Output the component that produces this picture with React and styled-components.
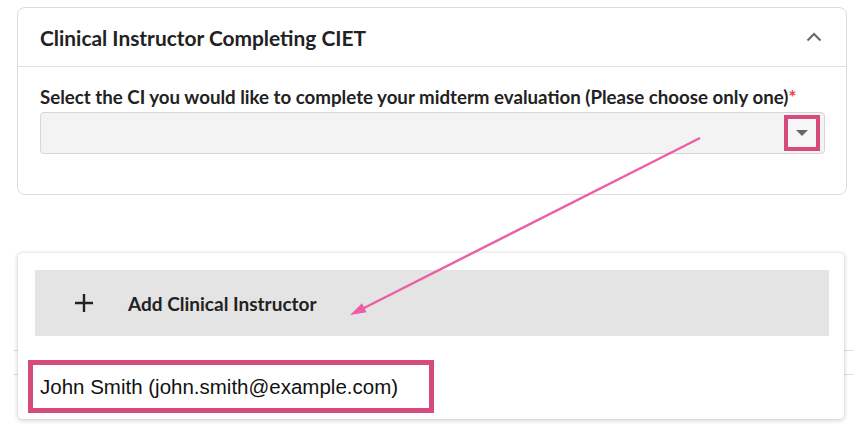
import React from "react";
import styled, { createGlobalStyle } from "styled-components";

const GlobalStyle = createGlobalStyle`
  html, body { margin: 0; padding: 0; background: #ffffff; }
  body { font-family: Lato, "Noto Sans", "Liberation Sans", sans-serif; color: #222; }
  * { box-sizing: border-box; }
`;

const Page = styled.div`
  position: relative;
  width: 854px;
  height: 428px;
  overflow: hidden;
  padding-top: 7px;
`;

const Card = styled.section`
  margin-left: 17px;
  width: 830px;
  height: 188px;
  border: 1px solid #dcdcdc;
  border-radius: 8px;
  background: #fff;
`;

const CardHeader = styled.div`
  height: 59px;
  display: flex;
  align-items: center;
  justify-content: space-between;
  padding: 0 24px 0 22px;
  border-bottom: 1px solid #e0e0e0;
`;

const Title = styled.h2`
  margin: 0;
  font-size: 20.9px;
  font-weight: 700;
  color: #222;
`;

const CardBody = styled.div`
  padding: 18px 22px 0 22px;
`;

const Label = styled.div`
  font-size: 18.7px;
  font-weight: 700;
  color: #222;
  line-height: 24px;
  margin-bottom: 3px;
  white-space: nowrap;
`;

const Required = styled.span`
  color: #e0463a;
`;

const Select = styled.div`
  height: 42px;
  width: 785px;
  background: #f3f3f3;
  border: 1px solid #d6d6d6;
  border-radius: 4px;
  display: flex;
  align-items: center;
  justify-content: flex-end;
  padding-right: 4px;
`;

const ArrowHighlight = styled.div`
  width: 36px;
  height: 36px;
  border: 4px solid #d64b7d;
  background: #f6f6f6;
  display: flex;
  align-items: center;
  justify-content: center;
`;

const Caret = styled.div`
  width: 0;
  height: 0;
  border-left: 6px solid transparent;
  border-right: 6px solid transparent;
  border-top: 6px solid #666;
`;

const BehindCard = styled.div`
  margin-top: 155px;
  margin-left: 13px;
  height: 60px;
  border-top: 1px solid #e2e2e2;
`;

const BehindHeader = styled.div`
  height: 24px;
  border-bottom: 1px solid #e2e2e2;
`;

const Popup = styled.div`
  position: absolute;
  left: 18px;
  top: 253px;
  width: 826px;
  height: 166px;
  background: #fff;
  border-radius: 4px;
  box-shadow: 0 1px 5px rgba(0, 0, 0, 0.22), 0 0 1px rgba(0, 0, 0, 0.15);
  padding: 17px 15px 0 17px;
`;

const AddRow = styled.div`
  height: 66px;
  background: #e4e4e4;
  display: flex;
  align-items: center;
  padding-left: 39px;
  gap: 34px;
`;

const AddText = styled.span`
  font-size: 19px;
  font-weight: 700;
  color: #222;
`;

const OptionRow = styled.div`
  margin-top: 24px;
  margin-left: -7px;
  display: flex;
`;

const OptionHighlight = styled.div`
  width: 406px;
  height: 53px;
  border: 5px solid #d64b7d;
  display: flex;
  align-items: center;
  padding-left: 7px;
  font-family: "Liberation Sans", Arial, sans-serif;
  font-size: 20.5px;
  color: #111;
`;

const Annotation = styled.svg`
  position: absolute;
  left: 0;
  top: 0;
  pointer-events: none;
`;

export default function App() {
  return (
    <>
      <GlobalStyle />
      <Page>
        <Card>
          <CardHeader>
            <Title>Clinical Instructor Completing CIET</Title>
            <svg width="16" height="10" viewBox="0 0 16 10">
              <path d="M1.5 8.5 L8 2 L14.5 8.5" fill="none" stroke="#666" strokeWidth="2" />
            </svg>
          </CardHeader>
          <CardBody>
            <Label>
              Select the CI you would like to complete your midterm evaluation (Please choose only one)
              <Required>*</Required>
            </Label>
            <Select>
              <ArrowHighlight>
                <Caret />
              </ArrowHighlight>
            </Select>
          </CardBody>
        </Card>
        <BehindCard>
          <BehindHeader />
        </BehindCard>
        <Popup>
          <AddRow>
            <svg width="20" height="20" viewBox="0 0 20 20">
              <path d="M10 1 V19 M1 10 H19" stroke="#222" strokeWidth="2.4" />
            </svg>
            <AddText>Add Clinical Instructor</AddText>
          </AddRow>
          <OptionRow>
            <OptionHighlight>John Smith (john.smith@example.com)</OptionHighlight>
          </OptionRow>
        </Popup>
        <Annotation width="854" height="428" viewBox="0 0 854 428">
          <line x1="700" y1="138" x2="362" y2="309" stroke="#ec5ea6" strokeWidth="2.4" />
          <polygon points="350,315 366.6,312.3 362,303.3" fill="#ec5ea6" />
        </Annotation>
      </Page>
    </>
  );
}
